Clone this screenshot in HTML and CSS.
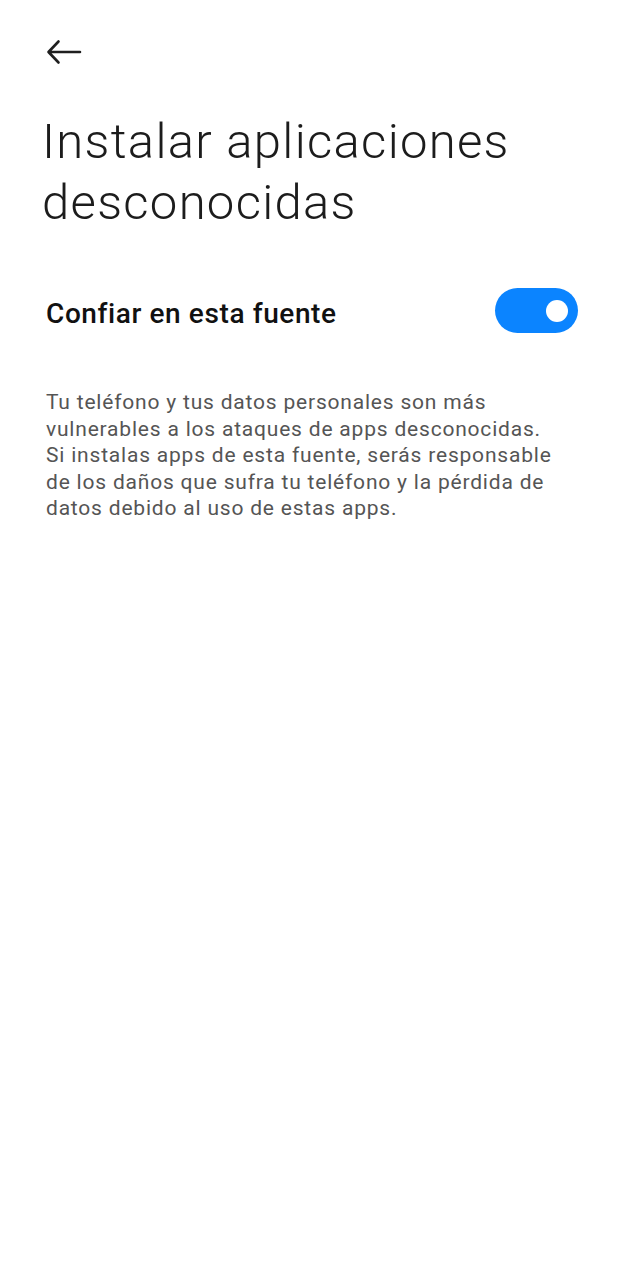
FILE: index.html
```html
<!DOCTYPE html>
<html lang="es">
<head>
    <meta charset="UTF-8">
    <meta name="viewport" content="width=device-width, initial-scale=1.0">
    <title>Instalar aplicaciones desconocidas</title>
    <link rel="stylesheet" href="styles.css">
</head>
<body>
    <!-- Barra superior -->
    <header class="top-bar">
        <button class="back-btn" aria-label="Atrás">
            <svg width="36" height="26" viewBox="0 0 36 26">
                <path d="M34 13H3M12.5 2.5L2.5 13L12.5 23.5" fill="none" stroke="#1f1f1f" stroke-width="2.6" stroke-linecap="round" stroke-linejoin="round"/>
            </svg>
        </button>
    </header>

    <h1 class="page-title">Instalar aplicaciones desconocidas</h1>

    <!-- Opción -->
    <div class="setting-row">
        <span class="setting-label">Confiar en esta fuente</span>
        <label class="switch">
            <input type="checkbox" checked>
            <span class="slider"></span>
        </label>
    </div>

    <p class="description">
        Tu teléfono y tus datos personales son más vulnerables a los ataques de apps desconocidas. Si instalas apps de esta fuente, serás responsable de los daños que sufra tu teléfono y la pérdida de datos debido al uso de estas apps.
    </p>
</body>
</html>
```

FILE: styles.css
```css
* {
    margin: 0;
    padding: 0;
    box-sizing: border-box;
}

body {
    font-family: Roboto, "Noto Sans", sans-serif;
    background-color: #fff;
    color: #1a1a1a;
    width: 625px;
}

.top-bar {
    height: 104px;
    padding: 39px 0 0 46px;
}

.back-btn {
    background: none;
    border: none;
    display: block;
    width: 36px;
    height: 26px;
}

.back-btn svg {
    display: block;
}

.page-title {
    font-weight: 300;
    font-size: 49px;
    line-height: 61px;
    letter-spacing: 1.3px;
    color: #1c1c1c;
    padding: 7px 60px 0 42px;
}

.setting-row {
    display: flex;
    align-items: center;
    justify-content: space-between;
    padding: 0 47px 0 46px;
    margin-top: 55px;
    height: 45px;
}

.setting-label {
    font-size: 28px;
    font-weight: 500;
    letter-spacing: 0.6px;
    color: #111;
    padding-top: 5px;
}

.switch {
    position: relative;
    display: block;
    width: 83px;
    height: 45px;
}

.switch input {
    display: none;
}

.slider {
    display: block;
    width: 100%;
    height: 100%;
    border-radius: 23px;
    background-color: #0b84ff;
    position: relative;
}

.slider::after {
    content: "";
    position: absolute;
    width: 22px;
    height: 22px;
    border-radius: 50%;
    background-color: #fff;
    top: 12px;
    right: 10px;
}

.description {
    font-size: 21px;
    line-height: 26.5px;
    letter-spacing: 0.8px;
    color: #555;
    padding: 0 70px 0 46px;
    margin-top: 56px;
}
```
